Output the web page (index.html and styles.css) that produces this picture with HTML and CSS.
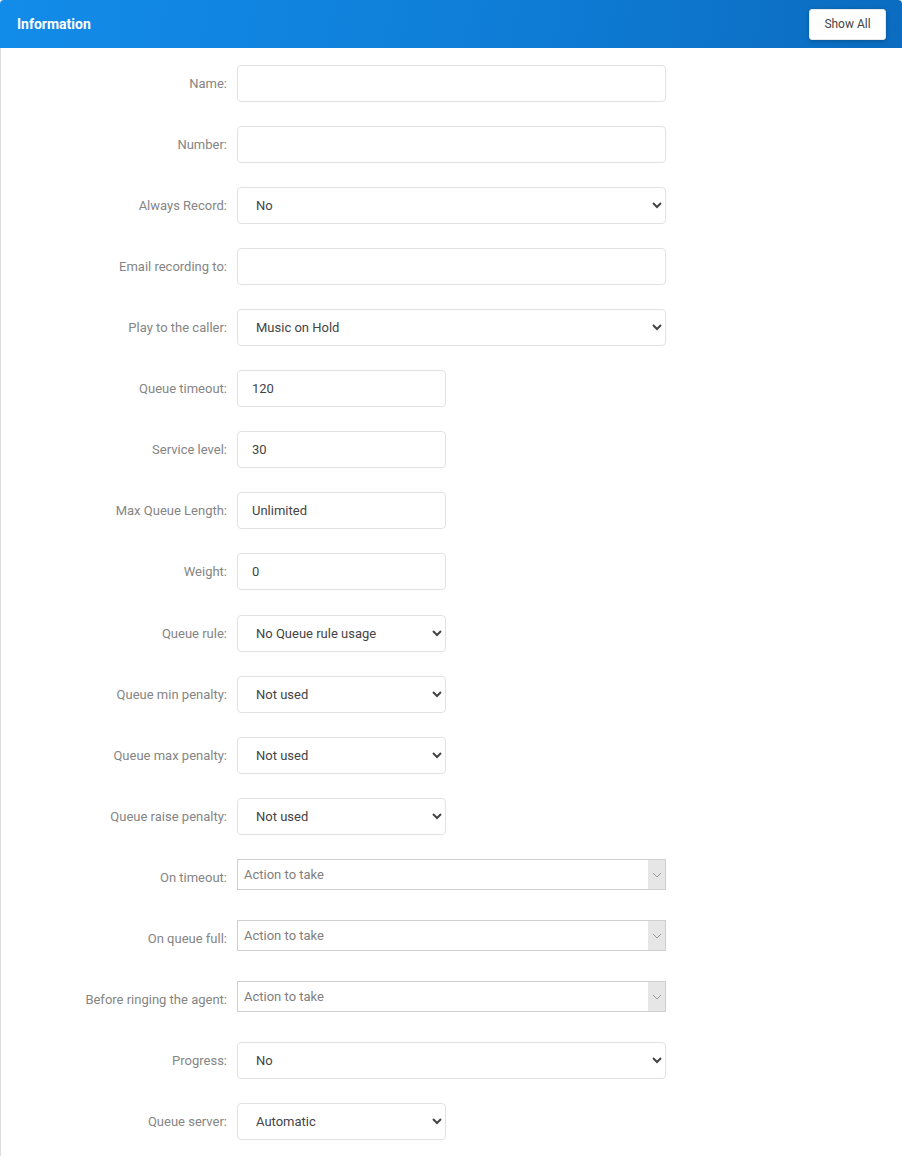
FILE: index.html
```html
<!DOCTYPE html>
<html>
<head>
<meta charset="utf-8">
<link rel="stylesheet" href="styles.css">
</head>
<body>
<div class="panel">
  <div class="panel-head">
    <span class="title">Information</span>
    <button class="btn-show">Show All</button>
  </div>
  <div class="panel-body">
    <div class="row"><label>Name:</label><input class="ctl long" type="text" value=""></div>
    <div class="row"><label>Number:</label><input class="ctl long" type="text" value=""></div>
    <div class="row"><label>Always Record:</label><select class="ctl long"><option>No</option></select></div>
    <div class="row"><label>Email recording to:</label><input class="ctl long" type="text" value=""></div>
    <div class="row"><label>Play to the caller:</label><select class="ctl long"><option>Music on Hold</option></select></div>
    <div class="row"><label>Queue timeout:</label><input class="ctl short" type="text" value="120"></div>
    <div class="row"><label>Service level:</label><input class="ctl short" type="text" value="30"></div>
    <div class="row"><label>Max Queue Length:</label><input class="ctl short" type="text" value="Unlimited"></div>
    <div class="row wide-gap"><label>Weight:</label><input class="ctl short" type="text" value="0"></div>
    <div class="row"><label>Queue rule:</label><select class="ctl short"><option>No Queue rule usage</option></select></div>
    <div class="row"><label>Queue min penalty:</label><select class="ctl short"><option>Not used</option></select></div>
    <div class="row"><label>Queue max penalty:</label><select class="ctl short"><option>Not used</option></select></div>
    <div class="row"><label>Queue raise penalty:</label><select class="ctl short"><option>Not used</option></select></div>
    <div class="row"><label>On timeout:</label><div class="action"><span>Action to take</span><span class="arrow"><svg width="10" height="6" viewBox="0 0 10 6"><path d="M1 1 L5 5 L9 1" fill="none" stroke="#999" stroke-width="1"/></svg></span></div></div>
    <div class="row"><label>On queue full:</label><div class="action"><span>Action to take</span><span class="arrow"><svg width="10" height="6" viewBox="0 0 10 6"><path d="M1 1 L5 5 L9 1" fill="none" stroke="#999" stroke-width="1"/></svg></span></div></div>
    <div class="row"><label>Before ringing the agent:</label><div class="action"><span>Action to take</span><span class="arrow"><svg width="10" height="6" viewBox="0 0 10 6"><path d="M1 1 L5 5 L9 1" fill="none" stroke="#999" stroke-width="1"/></svg></span></div></div>
    <div class="row"><label>Progress:</label><select class="ctl long"><option>No</option></select></div>
    <div class="row"><label>Queue server:</label><select class="ctl short"><option>Automatic</option></select></div>
  </div>
</div>
</body>
</html>
```
FILE: styles.css
```css
html, body {
  margin: 0;
  padding: 0;
  background: #fff;
  font-family: Roboto, "Liberation Sans", Arial, sans-serif;
}
.panel {
  width: 902px;
}
.panel-head {
  height: 48px;
  box-sizing: border-box;
  display: flex;
  align-items: center;
  justify-content: space-between;
  padding: 0 16px 0 17px;
  background: linear-gradient(100deg, #128ce9 0%, #0f7fd9 50%, #0b6cc0 100%);
  border-radius: 4px 4px 0 0;
}
.title {
  color: #fff;
  font-size: 14px;
  font-weight: 700;
}
.btn-show {
  width: 77px;
  height: 31px;
  background: #fff;
  border: 1px solid #e8e8e8;
  border-radius: 3px;
  color: #444;
  font-family: Roboto, "Liberation Sans", Arial, sans-serif;
  font-size: 12px;
  box-shadow: 0 1px 4px rgba(0, 0, 0, 0.25);
  padding: 0;
}
.panel-body {
  border-left: 1px solid #dcdcdc;
  padding: 17px 0 16px 0;
}
.row {
  display: grid;
  grid-template-columns: 226px auto;
  column-gap: 10px;
  align-items: start;
  height: 37px;
  margin-bottom: 24px;
}
.row.wide-gap {
  margin-bottom: 25px;
}
.row label {
  text-align: right;
  font-size: 13px;
  color: #858585;
  line-height: 37px;
}
.ctl {
  box-sizing: border-box;
  height: 37px;
  border: 1px solid #e2e2e2;
  border-radius: 4px;
  background: #fff;
  color: #444;
  font-family: Roboto, "Liberation Sans", Arial, sans-serif;
  font-size: 13px;
  padding: 0 14px;
  margin: 0;
  outline: none;
}
select.ctl {
  padding: 0 10px 0 14px;
}
.long { width: 429px; }
.short { width: 209px; }
.action {
  box-sizing: border-box;
  width: 429px;
  height: 31px;
  border: 1px solid #cfcfcf;
  background: #fff;
  display: flex;
  align-items: center;
  justify-content: space-between;
  font-size: 13px;
  color: #808080;
  padding-left: 6px;
}
.action .arrow {
  width: 17px;
  height: 100%;
  background: #e6e6e6;
  display: flex;
  align-items: center;
  justify-content: center;
}
```
